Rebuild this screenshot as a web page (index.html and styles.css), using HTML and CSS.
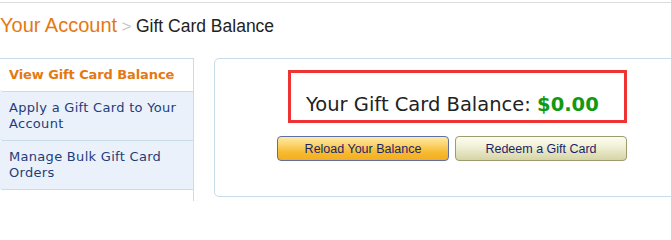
FILE: index.html
```html
<!DOCTYPE html>
<html>
<head>
<meta charset="utf-8">
<link rel="stylesheet" href="styles.css">
</head>
<body>
<div class="topline"></div>
<div class="breadcrumb"><span class="crumb-link">Your Account</span> <span class="crumb-sep">&gt;</span> <span class="crumb-current">Gift Card Balance</span></div>
<div class="layout">
  <div class="sidebar">
    <ul class="nav">
      <li class="nav-item active">View Gift Card Balance</li>
      <li class="nav-item">Apply a Gift Card to Your Account</li>
      <li class="nav-item">Manage Bulk Gift Card Orders</li>
    </ul>
  </div>
  <div class="main">
    <div class="balance-box">Your Gift Card Balance: <span class="amount">$0.00</span></div>
    <div class="buttons">
      <button class="btn btn-reload">Reload Your Balance</button>
      <button class="btn btn-redeem">Redeem a Gift Card</button>
    </div>
  </div>
</div>
</body>
</html>
```

FILE: styles.css
```css
html { overflow: hidden; height: 201px; }
body {
  margin: 0;
  height: 201px;
  overflow: hidden;
  background: #fff;
  font-family: "DejaVu Sans", Verdana, sans-serif;
}
.topline {
  height: 1px;
  background: #dcdcdc;
  margin-top: 2px;
}
.breadcrumb {
  margin-top: 11px;
  height: 22px;
  line-height: 22px;
  font-family: "Liberation Sans", Arial, sans-serif;
  white-space: nowrap;
}
.crumb-link { color: #e47911; font-size: 20px; }
.crumb-sep { color: #c8c8c8; font-size: 17px; }
.crumb-current { color: #222; font-size: 17.5px; }
.layout {
  display: flex;
  margin-top: 22px;
  align-items: flex-start;
}
.sidebar {
  width: 194px;
  height: 143px;
  flex: none;
  box-sizing: border-box;
  border-right: 1px solid #c9dcea;
}
.nav {
  list-style: none;
  margin: 0;
  padding: 0;
  border-top: 1px solid #c9dcea;
}
.nav-item {
  background: #eaf1fb;
  color: #1f3d7a;
  font-size: 13px;
  line-height: 16px;
  letter-spacing: 0.3px;
  padding: 8px 8px 8px 9px;
  border-bottom: 1px solid #c9dcea;
  border-bottom-left-radius: 3px;
}
.nav-item.active {
  background: #fff;
  color: #e47911;
  font-weight: bold;
  letter-spacing: -0.1px;
}
.main {
  flex: none;
  margin-left: 20px;
  width: 480px;
  height: 137px;
  border: 1px solid #c9dcea;
  border-radius: 5px;
  display: flex;
  flex-direction: column;
  align-items: flex-start;
}
.balance-box {
  margin-top: 11px;
  margin-left: 73px;
  border: 3px solid #ee3333;
  padding: 20px 0 3px 15px;
  box-sizing: border-box;
  width: 339px;
  font-size: 19.5px;
  line-height: 24px;
  color: #222;
  white-space: nowrap;
}
.amount {
  color: #129912;
  font-weight: bold;
}
.buttons {
  display: flex;
  gap: 6px;
  margin-top: 13px;
  margin-left: 62px;
}
.btn {
  width: 172px;
  height: 25px;
  border-radius: 4px;
  font-family: "Liberation Sans", Arial, sans-serif;
  font-size: 12.5px;
  color: #1d1f6b;
  padding: 0;
  cursor: pointer;
}
.btn-reload {
  border: 1px solid #5f6fa6;
  background: linear-gradient(#feeaa6 0%, #fbd36a 35%, #f7bb33 65%, #f3ae1e 100%);
}
.btn-redeem {
  border: 1px solid #9d9b70;
  background: linear-gradient(#fcfcf0 0%, #f1f1d8 40%, #e3e2bd 70%, #d6d4a6 100%);
}
```
